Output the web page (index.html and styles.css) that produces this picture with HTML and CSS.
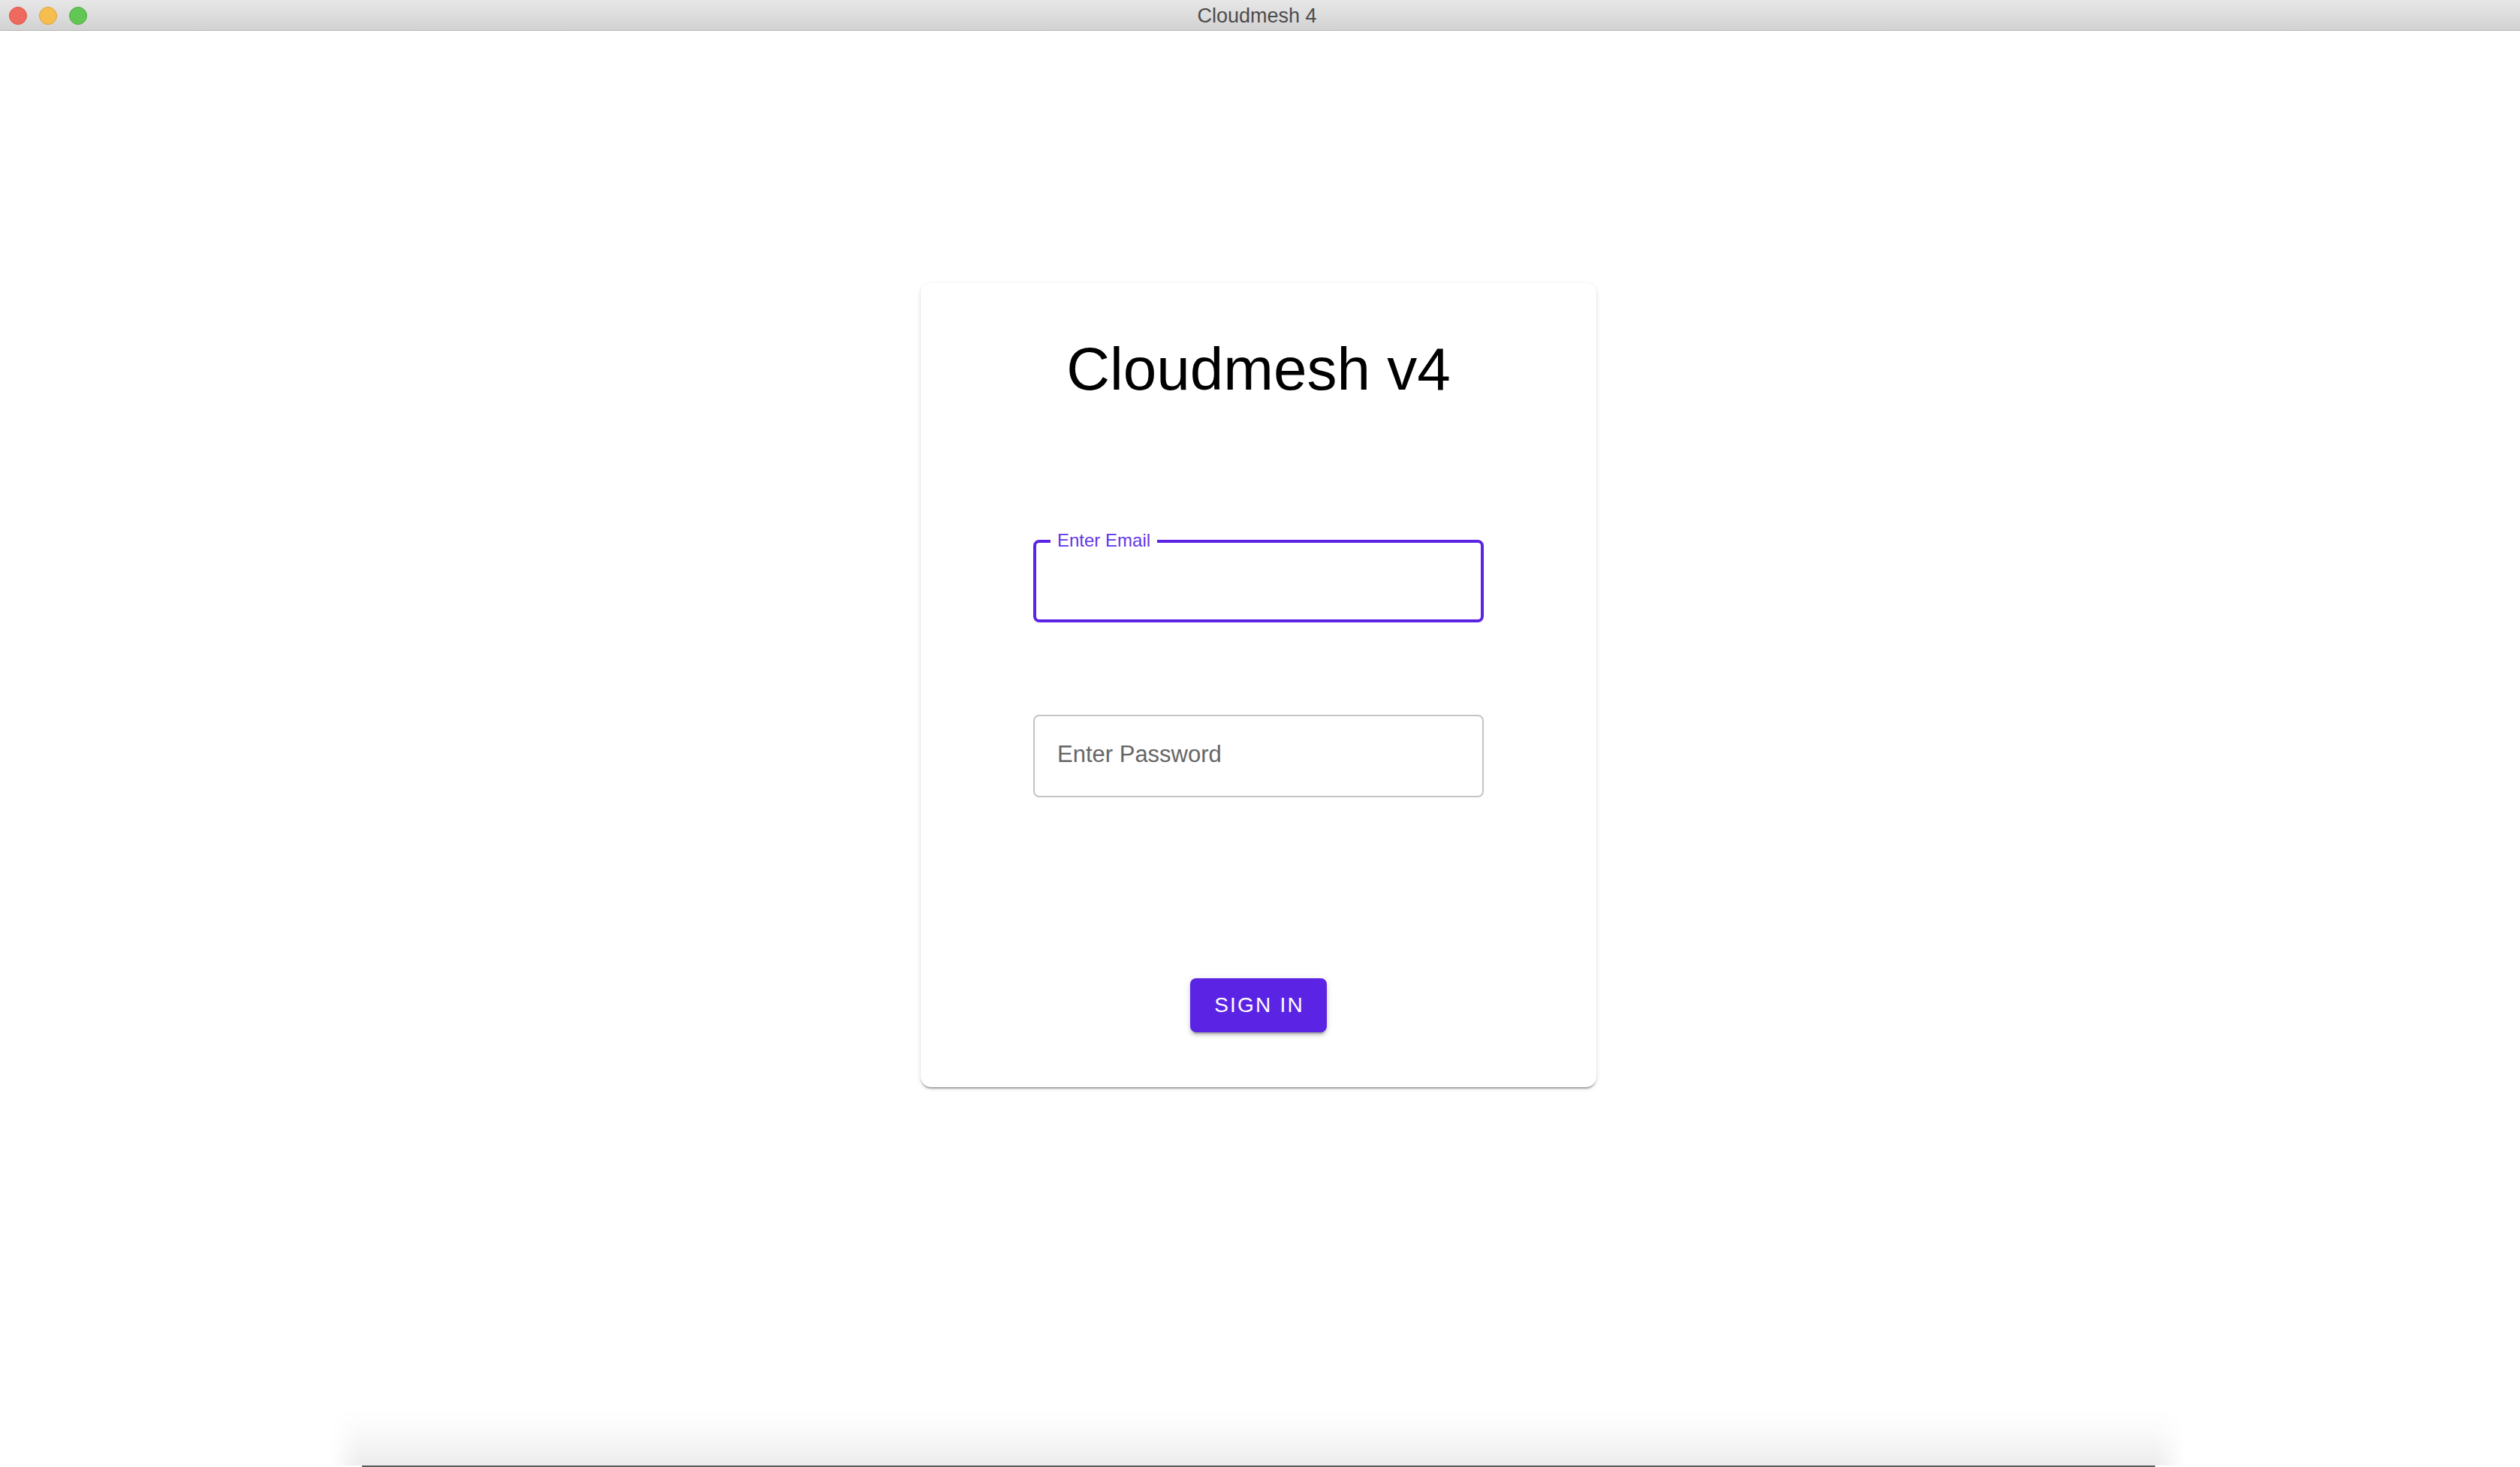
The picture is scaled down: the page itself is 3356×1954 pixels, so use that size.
FILE: index.html
```html
<!DOCTYPE html>
<html lang="en">
<head>
<meta charset="utf-8">
<title>Cloudmesh 4</title>
<link rel="stylesheet" href="styles.css">
</head>
<body>
<div class="window">
  <header class="titlebar">
    <div class="lights">
      <span class="light red"></span>
      <span class="light yellow"></span>
      <span class="light green"></span>
    </div>
    <div class="title">Cloudmesh 4</div>
    <div class="spacer"></div>
  </header>
  <main class="content">
    <section class="card">
      <h1 class="heading">Cloudmesh v4</h1>
      <div class="field field-focused">
        <span class="field-label">Enter Email</span>
      </div>
      <div class="field field-idle">
        <span class="placeholder">Enter Password</span>
      </div>
      <button class="signin" type="button">SIGN IN</button>
    </section>
  </main>
  <div class="bottom-shade"></div>
</div>
</body>
</html>
```

FILE: styles.css
```css
* { box-sizing: border-box; }
html, body {
  margin: 0;
  padding: 0;
  background: #ffffff;
  font-family: "Liberation Sans", Arial, sans-serif;
}
.window {
  position: relative;
  width: 3356px;
  height: 1954px;
  overflow: hidden;
  background: #ffffff;
}
.titlebar {
  height: 41px;
  display: grid;
  grid-template-columns: 1fr auto 1fr;
  align-items: center;
  background: linear-gradient(to bottom, #e8e7e8 0%, #d3d2d3 100%);
  border-bottom: 1px solid #b3b3b3;
}
.lights {
  display: flex;
  gap: 16px;
  padding-left: 12px;
  align-items: center;
  margin-top: 1px;
}
.light {
  width: 24px;
  height: 24px;
  border-radius: 50%;
  display: block;
}
.red { background: #ee6a5f; border: 1px solid #d9564c; }
.yellow { background: #f5be4f; border: 1px solid #dca23a; }
.green { background: #62c654; border: 1px solid #4fae43; }
.title {
  font-size: 27px;
  line-height: 40px;
  color: #4c4c4c;
  margin-right: 8px;
  padding-top: 1px;
}
.content {
  padding-top: 336px;
}
.card {
  width: 900px;
  height: 1071px;
  margin: 0 auto;
  transform: translateX(-2px);
  background: #ffffff;
  border-radius: 14px;
  box-shadow: 0 4px 2px -2px rgba(0,0,0,0.2), 0 2px 2px 0 rgba(0,0,0,0.14), 0 2px 6px 0 rgba(0,0,0,0.12);
  padding-top: 75px;
  display: flex;
  flex-direction: column;
  align-items: center;
}
.heading {
  margin: 0;
  font-size: 80px;
  line-height: 79px;
  font-weight: 400;
  color: #000000;
}
.field {
  position: relative;
  width: 600px;
  height: 110px;
  border-radius: 8px;
  display: flex;
  align-items: center;
}
.field-focused {
  margin-top: 188px;
  border: 4px solid #5b24e4;
}
.field-idle {
  margin-top: 123px;
  border: 2px solid #c4c4c4;
  padding-left: 30px;
  padding-bottom: 6px;
}
.field-label {
  position: absolute;
  top: -15px;
  left: 19px;
  padding: 0 9px;
  background: #ffffff;
  font-size: 24px;
  line-height: 24px;
  color: #6336e6;
}
.placeholder {
  font-size: 31px;
  line-height: 31px;
  color: #666666;
}
.signin {
  margin-top: 241px;
  height: 72px;
  padding: 0 30px 0 32px;
  border: 0;
  border-radius: 8px;
  background: #5b24e4;
  color: #ffffff;
  font-family: "Liberation Sans", Arial, sans-serif;
  font-size: 28px;
  letter-spacing: 2.2px;
  box-shadow: 0 6px 2px -4px rgba(0,0,0,0.2), 0 4px 4px 0 rgba(0,0,0,0.14), 0 2px 10px 0 rgba(0,0,0,0.12);
}
.bottom-shade {
  position: absolute;
  left: 440px;
  width: 2470px;
  bottom: 0;
  height: 78px;
  background: linear-gradient(to bottom, rgba(0,0,0,0) 0%, rgba(0,0,0,0.02) 40%, rgba(0,0,0,0.075) 100%);
  -webkit-mask-image: linear-gradient(to right, transparent 0, #000 40px, #000 calc(100% - 40px), transparent 100%);
  mask-image: linear-gradient(to right, transparent 0, #000 40px, #000 calc(100% - 40px), transparent 100%);
  border-bottom: 2px solid transparent;
}
.bottom-shade::after {
  content: "";
  position: absolute;
  left: 42px;
  right: 40px;
  bottom: -2px;
  height: 2px;
  background: #5a5a5a;
}
```
